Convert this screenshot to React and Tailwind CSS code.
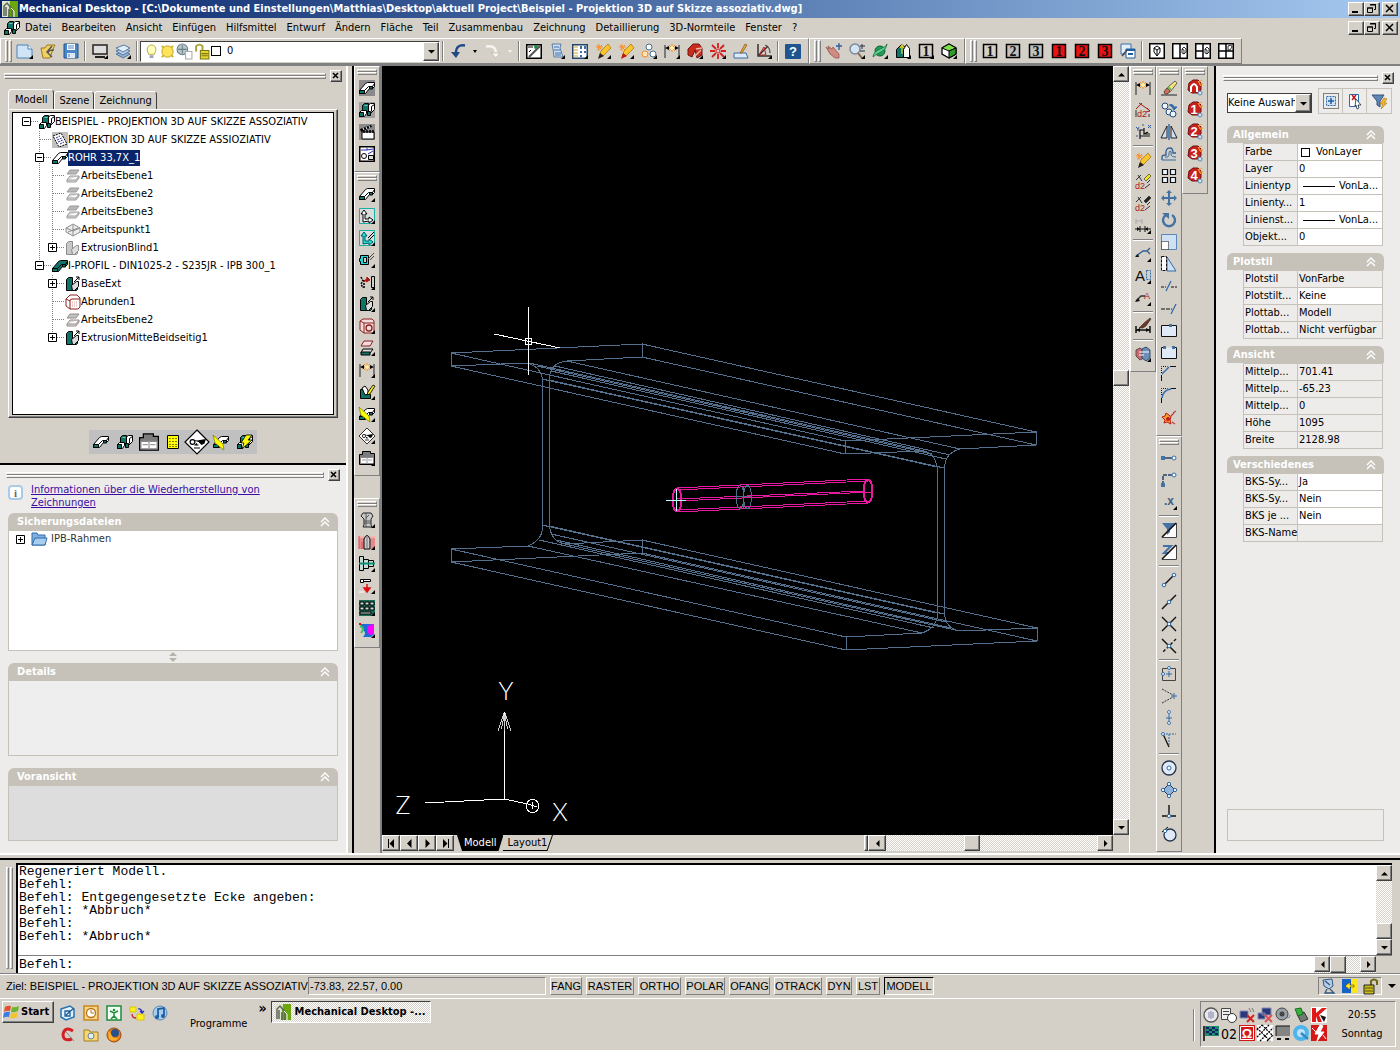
import React from "react";
import clsx from "clsx";

const raised =
  "border border-t-white border-l-white border-r-[#404040] border-b-[#404040] bg-[#d4d0c8] shadow-[inset_-1px_-1px_#808080]";
const track =
  "bg-[repeating-conic-gradient(#ffffff_0_25%,#d4d0c8_0_50%)] bg-[length:2px_2px]";

/* ---------- icons, all on a 16px grid ---------- */

const Svg = ({ children, className = "size-4" }) => (
  <svg viewBox="0 0 16 16" className={clsx("block shrink-0 overflow-visible", className)} fill="none" aria-hidden="true">
    {children}
  </svg>
);

const Beam = ({ top = "#fff", end = "#0e7468" }) => (
  <>
    <path d="M.5 10.500l6-7 2-1h7v4l-2 2h-3l-4 5h-6z" fill={top} stroke="#000" />
    <path d="M.5 10.500h5v3h-5zM10.500 6.500h3v2.500h-3z" fill={end} stroke="#000" />
    <path d="M5.500 10.500l4-4h4l2-3" stroke="#000" />
  </>
);

const Assembly = ({ bg }) => (
  <>
    {bg && <path d="M0 0h16v16H0z" fill={bg} />}
    <path d="M8.500 3.500l3-2h4v6l-4 4h-3z" fill="#fff" stroke="#000" />
    <path d="M12.500 4.500v5M12.500 4.500l3-2" stroke="#000" />
    <path d="M3.500 3.500l2-2h4v8h-6z" fill="#0e7468" stroke="#000" />
    <path d="M6 3h3l-1 1H5z" fill="#7fc4ba" />
    <path d="M.5 10.500l2-2h5v3l-2 3h-5z" fill="#fff" stroke="#000" />
    <path d="M.5 10.500h4v4h-4zM8.500 9.500h3v4h-3z" fill="#0e7468" stroke="#000" />
  </>
);

const Plane = ({ top = "#b8b8b8", side = "#9a9a9a" }) => (
  <>
    <path d="M5 2h9l-3 4H2z" fill={top} stroke={side} />
    <path d="M5 8h9l-3 4H2zM2 12v2h9l3-4V8" fill="#ddd" stroke={side} />
  </>
);

const Extrude = ({ fill = "#0e7468", line = "#000", arrow = true }) => (
  <>
    <path d="M1.500 3.500l2-2h4v7h5v5l-1 1h-10z" fill={fill} stroke={line} />
    <path d="M6.500 9.500l5-4h2v5l-4 4h-2z" fill="#ddd" stroke={line} />
    {arrow && <path d="M9 6l5-5M11 1h3v3" stroke={line} />}
  </>
);

const Dimension = () => (
  <>
    <path d="M1 2v13M15 2v13" stroke="#222" />
    <path d="M8 1v8M4 5h8M5 2l6 6M11 2l-6 6" stroke="#f28c28" />
    <circle cx="8" cy="5" r="2" fill="#fff1a8" />
    <path d="M1 5l4-2v4zM15 5l-4-2v4z" fill="#000" />
  </>
);

const Pencil = ({ tip = "#222" }) => (
  <>
    <path d="M1 4h7M4 1v7M2 2l5 5M7 2L2 7" stroke="#ff8a1c" />
    <path d="M4 14l2-6 7-7 3 4-8 8z" fill="#f9c52e" stroke="#a96b00" strokeWidth=".7" />
    <path d="M3 16l2-6 4 3z" fill={tip} />
  </>
);

const Face = () => (
  <>
    <path d="M8 0l8 8-8 8-8-8z" fill="#fff" stroke="#000" strokeWidth=".8" />
    <path d="M3 6l5 1 6-1-1 3-2 1-2-2" fill="#000" />
    <circle cx="5" cy="8" r="1.600" fill="#fff" stroke="#000" strokeWidth=".8" />
    <path d="M6 12h4M8 9l-1 1h2" stroke="#000" strokeWidth=".8" />
  </>
);

const Window = () => (
  <>
    <path d="M.5 4.500h3v-3h8v2h4v11H.5z" fill="#7c7c7c" stroke="#000" />
    <path d="M1.500 7.500h13v6h-13z" fill="#fff" stroke="#888" />
    <path d="M3 10h4M9 10h4M8 7v7" stroke="#999" />
  </>
);

const Bolt = () => (
  <>
    <Beam />
    <path d="M0 1l10 9 1 6L2 9z" fill="#ffff00" stroke="#777700" strokeWidth=".7" />
  </>
);

const Digit = ({ n, bg }) => (
  <>
    <path d="M1.500 1.500h13v13h-13z" fill={bg} stroke="#000" strokeWidth="1.500" />
    <text x="8" y="13" textAnchor="middle" fontSize="14" fontWeight="bold" fontFamily="Liberation Serif, serif" fill="#111">
      {n}
    </text>
  </>
);

const RedBall = ({ n }) => (
  <>
    <path d="M2 3l4-3h5l3 3v7l-3 3H5l-4-3z" fill="#c8201c" stroke="#6e1210" />
    <path d="M11 2l4-2M12 4h4M11 1l3 5" stroke="#ff9a2c" />
    <circle cx="13" cy="13" r="2" fill="#cfe3f5" stroke="#5b88b5" />
    {n ? (
      <text x="7" y="12" textAnchor="middle" fontSize="13" fontWeight="bold" fontFamily="Liberation Sans, sans-serif" fill="#fff">
        {n}
      </text>
    ) : (
      <path d="M4 12V7q3-6 6 0v5" stroke="#fff" strokeWidth="2" />
    )}
  </>
);

const Snap = ({ d, dots = [], dash }) => (
  <>
    <path d={d} stroke="#111" strokeWidth="1.400" strokeDasharray={dash} />
    {dots.map(([x, y]) => (
      <circle key={`${x}-${y}`} cx={x} cy={y} r="1.800" fill="#e6f2ff" stroke="#2e6ba8" />
    ))}
  </>
);

const Dim2 = ({ pen = "#222" }) => (
  <>
    <path d="M3 1l4 6M1 6l5-5M12 9l3-3" stroke="#333" />
    <path d="M9 5l5-5 2 2-5 5z" fill={pen} stroke="#222" strokeWidth=".6" />
    <text x="0" y="15" fontSize="9" fontFamily="Liberation Sans, sans-serif" fill="#b01818">d2</text>
    <path d="M10 14l5-4" stroke="#333" />
  </>
);

const ViewBox = ({ split }) => (
  <>
    <path d="M.750 .750h14.500v14.500H.750z" fill="#fff" stroke="#000" strokeWidth="1.500" />
    {split > 0 && <path d="M8 1v14" stroke="#000" strokeWidth="1.500" />}
    {split > 1 && <path d="M1 8h7" stroke="#000" strokeWidth="1.500" />}
    {split > 2 && <path d="M8 8h7" stroke="#000" strokeWidth="1.500" />}
    {split > 0 ? (
      <path d={split > 2 ? "M10 3l3-1 1 2-2 3h-2z" : "M10 6l2-2 2 2v3l-2 2-2-1zM10 6l2 1v4"} stroke="#000" strokeWidth=".8" />
    ) : (
      <path d="M5 5l3-2 3 2v4l-3 4-3-4zM5 5l3 2 3-2M8 7v5" stroke="#000" />
    )}
  </>
);

const ICONS = {
  app: (
    <>
      <path d="M0 0h16v16H0z" fill="#dfe6cf" />
      <path d="M8 0h8v16H6z" fill="#6aa60c" />
      <path d="M2 15V5l3-3 5 6v8M4 6v9M7 8v8" stroke="#5c665c" strokeWidth="1.500" />
      <path d="M9 7l3 3v6" stroke="#fff" />
    </>
  ),
  assembly: <Assembly />,
  assemblyGrey: <Assembly bg="#a0a0a0" />,
  newFile: (
    <>
      <path d="M0 2h11l4 4v9H0z" fill="#cfe5f7" stroke="#4b83b6" />
      <path d="M11 2v4h4" fill="#fff" stroke="#4b83b6" />
    </>
  ),
  open: (
    <>
      <path d="M1 5h4l2-3h8l-2 4-3 9H3z" fill="#f0d165" stroke="#9b7a1a" />
      <path d="M8 10q0-3 6-3M12 3l-5 6 5 5" stroke="#585858" strokeWidth="1.500" />
    </>
  ),
  save: (
    <>
      <path d="M1 1h14v14H1z" fill="#4b86c5" stroke="#23558c" />
      <path d="M4 1h8v6H4z" fill="#fff" />
      <path d="M4 10h8v5H4z" fill="#dce8f3" />
      <path d="M5 3h6M5 5h6M6 11v3" stroke="#4b86c5" />
    </>
  ),
  screen: (
    <>
      <path d="M1 2h14v9H1z" fill="#ddd" stroke="#222" strokeWidth="1.500" />
      <path d="M3 14h10" stroke="#222" strokeWidth="2" />
    </>
  ),
  layers: (
    <>
      <path d="M1 11l8-3 6 3-7 4z" fill="#8fb0d6" stroke="#56779c" />
      <path d="M1 8l8-3 6 3-7 4z" fill="#b9d1ea" stroke="#56779c" />
      <path d="M1 5l8-3 6 3-7 4z" fill="#e2eefa" stroke="#56779c" />
    </>
  ),
  bulb: (
    <>
      <path d="M5 11q-3-5-1-8 4-4 8 0 2 3-1 8z" fill="#ffffc0" stroke="#b7a93c" />
      <path d="M6 12h4v3H6z" fill="#9aa4b5" />
    </>
  ),
  sun: (
    <>
      <path d="M2 2l12 12M14 2L2 14" stroke="#c8b430" strokeWidth="2" />
      <circle cx="8" cy="8" r="6" fill="#ffe45a" stroke="#b9a01c" />
    </>
  ),
  freeze: (
    <>
      <circle cx="6" cy="6" r="5" fill="#b6c6c9" stroke="#6c8187" />
      <path d="M2 6h8M6 2v8" stroke="#6c8187" />
      <path d="M9 8h6v7H9z" fill="#fff" stroke="#aaa" />
    </>
  ),
  lock: (
    <>
      <path d="M2 8V3q3-3 6 0v4" stroke="#a8a030" strokeWidth="1.800" />
      <path d="M6 7h8v8H6z" fill="#e6d72e" stroke="#7d7510" />
      <path d="M7 10h6M7 12h6" stroke="#7d7510" />
    </>
  ),
  undo: (
    <>
      <path d="M15 2.500Q6 1 6 10" stroke="#234a86" strokeWidth="2.500" />
      <path d="M1 9h9l-4 6z" fill="#234a86" />
    </>
  ),
  redo: (
    <>
      <path d="M1 3.500q10-2 10 7" stroke="#f6f4f0" strokeWidth="2.500" />
      <path d="M6 10h9l-4 5z" fill="#f6f4f0" stroke="#b5b1a8" strokeWidth=".7" />
    </>
  ),
  sketch: (
    <>
      <path d="M.750 1.750h14.500v13.500H.750z" fill="#fff" stroke="#000" strokeWidth="1.500" />
      <path d="M3 14L14 3" stroke="#555" strokeWidth="2" />
      <path d="M2 4h5M3 9l2-2" stroke="#000" />
      <circle cx="10" cy="4" r="2" fill="#208a40" />
    </>
  ),
  list: (
    <>
      <path d="M3 1h9l-1 4 3 9H5L4 6z" fill="#cfe0f2" stroke="#5c7ca3" />
      <path d="M5 4h5M5 7h6M6 10h6M6 12h6" stroke="#3d6ea6" />
    </>
  ),
  grid: (
    <>
      <path d="M.750 1.750h14.500v13.500H.750z" fill="#fff" stroke="#24446c" strokeWidth="1.500" />
      <path d="M2 4h4M2 7h4M2 10h4M2 13h4" stroke="#d0a21c" />
      <path d="M8 3h2v3H8zM12 3h2v3h-2zM8 8h2v2H8zM12 8h2v2h-2zM8 12h2v2H8z" fill="#3a6ca8" />
    </>
  ),
  pencil: <Pencil />,
  pencil2: <Pencil tip="#c01818" />,
  gears: (
    <>
      <circle cx="8" cy="4" r="3" fill="#fff" stroke="#4a7097" />
      <circle cx="4" cy="11" r="3" fill="#ffe5b8" stroke="#f08c20" />
      <circle cx="12" cy="11" r="3" fill="#fff" stroke="#4a7097" />
    </>
  ),
  dimension: <Dimension />,
  magnet: (
    <>
      <path d="M1 6l5-5h6l3 4v7l-5 3-2-8-3 7-4-2z" fill="#cc2a1c" stroke="#701410" />
      <path d="M9 6l6-1M8 13l6-6" stroke="#e8b8a8" strokeWidth="1.500" />
    </>
  ),
  burst: (
    <>
      <path d="M8 0v5M8 11v5M0 8h5M11 8h5M2 2l4 4M10 10l4 4M14 2l-4 4M6 10l-4 4" stroke="#d42020" strokeWidth="1.800" />
      <circle cx="8" cy="8" r="2" stroke="#d42020" />
    </>
  ),
  draft: (
    <>
      <path d="M1 10h12l2 5H1z" fill="#dceaf8" stroke="#3b6ba2" />
      <path d="M7 10l5-9 2 1-5 8z" fill="#e9a23a" stroke="#845614" strokeWidth=".7" />
    </>
  ),
  angle: (
    <>
      <path d="M2 1v12h13M2 13L12 3" stroke="#333" strokeWidth="1.500" />
      <path d="M3 12l5-8 2 8z" stroke="#b02424" />
      <path d="M9 2q5 2 5 8" stroke="#333" />
    </>
  ),
  help: (
    <>
      <rect x="0" y="1" width="16" height="15" rx="1" fill="#1e5590" />
      <text x="8" y="13" textAnchor="middle" fontSize="13" fontWeight="bold" fontFamily="Liberation Sans, sans-serif" fill="#fff">?</text>
    </>
  ),
  pan: (
    <>
      <path d="M0 4l3 2-1-3 4 3 1-2 6 7v4l-4 0-5-4z" fill="#cf8a82" stroke="#8b4d49" strokeWidth=".7" />
      <path d="M13 0v7M10 3h6" stroke="#2d5da0" strokeWidth="1.300" />
    </>
  ),
  zoom: (
    <>
      <circle cx="6" cy="6" r="5" fill="#d3e4f3" stroke="#7b8a9a" strokeWidth="1.500" />
      <path d="M9 10l4 5" stroke="#8b6a4a" strokeWidth="2" />
      <path d="M13 1v5M11 3h5M11 8h5" stroke="#234" />
    </>
  ),
  orbit: (
    <>
      <circle cx="8" cy="8" r="5" fill="#21a05a" stroke="#0d5e31" />
      <path d="M1 14Q1 9 8 6t7-5q0 5-6 8t-8 5" fill="#5ad08c" stroke="#0d5e31" strokeWidth=".7" />
    </>
  ),
  home: (
    <>
      <path d="M1.500 6.500l5-5 4 3v10h-9z" fill="#0e7468" stroke="#000" />
      <path d="M8.500 6.500l3-5 3 4v9h-6z" fill="#fff" stroke="#000" />
      <path d="M7 11V3M5 5l2-3 2 3" stroke="#e0d020" strokeWidth="1.300" />
    </>
  ),
  cube: (
    <>
      <path d="M8 1l7 4v6l-7 4-7-4V5z" fill="#fff" stroke="#000" strokeWidth="1.300" />
      <path d="M8 1l7 4-7 3-7-3z" fill="#7ce04a" stroke="#000" />
      <path d="M15 5v6l-7 4V8z" fill="#2f9c28" stroke="#000" />
    </>
  ),
  one: <Digit n="1" bg="#d4d0c8" />,
  two: <Digit n="2" bg="#c0c0c0" />,
  three: <Digit n="3" bg="#c0c0c0" />,
  redOne: <Digit n="1" bg="#ee1111" />,
  redTwo: <Digit n="2" bg="#ee1111" />,
  redThree: <Digit n="3" bg="#ee1111" />,
  views: (
    <>
      <path d="M1 1h10v10H1z" fill="#e4eef8" stroke="#3d6ea6" />
      <path d="M6 6h9v9H6z" fill="#fff" stroke="#1f5fa0" />
      <path d="M6 7h9M8 11h5" stroke="#1f5fa0" strokeWidth="2" />
      <path d="M2 13l5-6" stroke="#445" strokeWidth="1.500" />
    </>
  ),
  view0: <ViewBox split={0} />,
  view1: <ViewBox split={1} />,
  view2: <ViewBox split={2} />,
  view3: <ViewBox split={3} />,
  part: <Beam />,
  partGrey: (
    <>
      <path d="M0 0h16v16H0z" fill="#8a8a8a" />
      <Beam />
    </>
  ),
  partGreen: <Beam top="#0e7468" />,
  clapper: (
    <>
      <path d="M0 0h16v16H0z" fill="#8a8a8a" />
      <path d="M1 5l11-4 1 2L2 8z" fill="#000" />
      <path d="M4 4l1 2M7 3l1 2M10 2l1 2" stroke="#fff" />
      <path d="M3 8h12v7H3z" fill="#fff" stroke="#000" />
      <path d="M5 6v3M8 6v3M11 6v3M14 6v3" stroke="#000" strokeWidth="1.500" />
    </>
  ),
  drawing: (
    <>
      <path d="M.750 .750h14.500v14.500H.750z" fill="#fff" stroke="#000" strokeWidth="1.500" />
      <path d="M2 4h6V2M8 4l6-1M9 8l5-3" stroke="#2a2ac0" />
      <circle cx="5" cy="10" r="2.500" stroke="#000" />
      <path d="M9.500 9.500h5v4h-5z" fill="#ddd" stroke="#000" />
    </>
  ),
  axes: (
    <>
      <path d="M.500 .500h15v15H.500z" stroke="#1bb0a4" fill="#dcdcdc" />
      <path d="M4 14V6H2l3-4 3 4H6v5h4V9l4 3-4 3v-2z" fill="#fff" stroke="#000" />
    </>
  ),
  axesCyan: (
    <>
      <path d="M.500 .500h15v15H.500z" stroke="#1bb0a4" fill="#dcdcdc" />
      <path d="M4 14V6H2l3-4 3 4H6v5h4V9l4 3-4 3v-2z" fill="#20e0e0" stroke="#005a5a" />
      <path d="M9 8l6-6M11 9l4-4" stroke="#000" />
    </>
  ),
  profile: (
    <>
      <path d="M1.500 3.500h8v9h-8v-3h-1v-3h1z" fill="#20d8d8" stroke="#000" />
      <path d="M4.500 5.500h3v5h-3z" fill="#d4d0c8" stroke="#000" />
      <path d="M9 7l6-6M11 8l4-4" stroke="#444" />
    </>
  ),
  mirrorPart: (
    <>
      <path d="M2 3l2 4-2 3 2 4M5 6v8" stroke="#000" strokeDasharray="2 1" strokeWidth="1.500" />
      <path d="M4 8q3-4 6-2M8 3l3 3-4 2z" stroke="#b01818" fill="#b01818" />
      <path d="M12.500 2.500h3v11h-3z" stroke="#000" />
    </>
  ),
  extrude: <Extrude />,
  extrudeGrey: <Extrude fill="#c8c8c8" line="#8c8c8c" arrow={false} />,
  hole: (
    <>
      <path d="M1 3l3-2h9l2 2v12H5l-4-3z" fill="#f3dcdc" stroke="#8c2020" />
      <path d="M5 5h10M5 5v10M1 3l4 2" stroke="#8c2020" />
      <circle cx="10" cy="10" r="3" stroke="#8c2020" strokeWidth="1.300" />
    </>
  ),
  round: (
    <>
      <path d="M1 5l4-4h7l3 3v9l-2 2H5l-4-3z" fill="#fff" stroke="#8c2020" />
      <path d="M5 15V7q0-2 2-2h8M1 5l4 2" stroke="#8c2020" />
      <path d="M7 8h6M7 10h6M7 12h6" stroke="#d8a0a0" strokeDasharray="1 1" />
    </>
  ),
  plane: <Plane />,
  planeRed: (
    <>
      <path d="M5 1h9l-3 5H2z" fill="#f3dcdc" stroke="#8c2020" />
      <path d="M4 9h10l-3 4H2z" fill="#ddd" stroke="#000" />
      <path d="M2 12h9v3H2z" fill="#0e7468" stroke="#000" />
    </>
  ),
  planeTwo: <Plane top="#b9c6c2" side="#9a8a8a" />,
  point: (
    <>
      <path d="M8 2l7 4v4l-7 4-7-4V6z" fill="#eee" stroke="#8c8c8c" />
      <path d="M1 6l7 3 7-3M8 3v11M3 10l10-4" stroke="#8c8c8c" />
    </>
  ),
  sheet: (
    <>
      <path d="M0 0h16v16H0z" fill="#c0c0c0" />
      <path d="M1 4l8-3 6 11-8 3z" fill="#fff" stroke="#000" strokeDasharray="2 1" />
      <path d="M4 6l4-2M5 8l5-2M6 10l5-2M8 12l4-2" stroke="#22228c" strokeDasharray="2 1" />
    </>
  ),
  editPart: (
    <>
      <path d="M1.500 5.500v9h10v-4h-5v-5z" fill="#0e7468" stroke="#000" />
      <path d="M3 4l3-2 3 4v4l-3 1z" fill="#fff" stroke="#000" />
      <path d="M8 11l1-3 5-7 2 1-5 8z" fill="#f2e61c" stroke="#000" strokeWidth=".8" />
    </>
  ),
  bolt: <Bolt />,
  face: <Face />,
  window: <Window />,
  page: (
    <>
      <path d="M2.500 1.500h11v13h-11z" fill="#ffff00" stroke="#000" />
      <path d="M4 4.500h8M4 7.500h8M4 10.500h8M4 12.500h8" stroke="#8a7a00" strokeDasharray="2 1" />
    </>
  ),
  flash: (
    <>
      <Assembly />
      <path d="M9 1h6l-4 5h4L5 15l2-6H4z" fill="#ffff00" stroke="#000" strokeWidth=".8" />
    </>
  ),
  screw: (
    <>
      <path d="M4 1h8l2 3-2 3v6l1 2H4l1-2V7L2 4z" fill="#c9c9c9" stroke="#222" />
      <path d="M7 1v14M10 3l-3 3M5 9h7M5 11h7" stroke="#555" />
    </>
  ),
  holeRed: (
    <>
      <path d="M0 2h16v13H0z" fill="#f0b4b4" />
      <path d="M0 4h5v11H0zM12 4h4v11h-4z" fill="#e88a8a" />
      <path d="M0 15V2M3 15V8" stroke="#d84a4a" />
      <path d="M5 15V5q3-7 6 0v10z" fill="#ccc" stroke="#000" />
      <path d="M8 3v12" stroke="#777" />
    </>
  ),
  shaft: (
    <>
      <path d="M.5 .5h4v14h-4zM4.500 3.500h5v9h-5zM9.500 4.500h5v6h-5z" fill="#c8dcd4" stroke="#000" />
      <path d="M0 7.500h16" stroke="#0e9078" strokeWidth="2" />
    </>
  ),
  insert: (
    <>
      <path d="M1.500 1.500h3v3h-3zM4.500 1.500h7v2h-7z" fill="#fff" stroke="#000" />
      <path d="M8 6v4H5l3 4 3-4H8" fill="#e01010" stroke="#e01010" strokeWidth="1.500" />
      <path d="M0 14h5" stroke="#fff" />
    </>
  ),
  calc: (
    <>
      <path d="M0 0h16v16H0z" fill="#1d6a58" />
      <path d="M1 2h4v3H1zM6 2h4v3H6zM11 2h4v3h-4zM1 7h4v3H1zM6 7h4v3H6zM11 7h4v3h-4zM1 12h11v2H1z" fill="#c8dcd4" stroke="#000" />
    </>
  ),
  fem: (
    <>
      <path d="M1 2h14v10l-3 3H4q4-4 0-7z" fill="#1c6cd8" />
      <path d="M10 3q-4 6 1 10l4-1V2z" fill="#ff00ff" />
      <path d="M1 4q3 1 3 4l-2 3" stroke="#40c060" strokeWidth="2" />
      <path d="M0 1h2v2H0z" fill="#f00" />
    </>
  ),
  paramDim: (
    <>
      <path d="M1 7l6-6M4 1l10 7M12 6l3 3-4 1" stroke="#a01818" />
      <text x="2" y="15" fontSize="9" fontFamily="Liberation Sans, sans-serif" fill="#a01818">d2</text>
      <path d="M1 8v7M14 12v3" stroke="#333" />
    </>
  ),
  ordinate: (
    <>
      <path d="M5 15V6h4v4h6M5 12h10M9 4v6l4-2" stroke="#111" strokeWidth="1.200" />
      <path d="M1 3l2 2 1-2M3 5v2M7 1h2M13 1l3 3M16 1l-3 3M1 12h2" stroke="#2d5da0" />
    </>
  ),
  editDim: <Dim2 pen="#f2e61c" />,
  moveDim: <Dim2 />,
  alignDim: (
    <>
      <path d="M1 1v5M7 1v5M1 3h6" stroke="#aaa" />
      <path d="M0 11h16M5 8v6M10 8v6" stroke="#111" />
      <path d="M5 11l-3-2v4zM10 11l3-2v4z" fill="#111" />
    </>
  ),
  leader: (
    <>
      <path d="M1 10l7-5h4l3-3M12 5l3 3" stroke="#2e5f96" strokeWidth="1.300" />
      <path d="M0 11l3-3 1 3z" fill="#111" />
    </>
  ),
  textA: (
    <>
      <text x="0" y="13" fontSize="15" fontFamily="Liberation Sans, sans-serif" fill="#111">A</text>
      <path d="M11.500 2.500h4v9h-4z" stroke="#2e6ba8" strokeDasharray="2 1" />
    </>
  ),
  leaderA: (
    <>
      <path d="M1 11l5-5h4" stroke="#333" strokeWidth="1.300" />
      <path d="M0 12l3-4 2 3z" fill="#111" />
      <text x="9" y="9" fontSize="9" fontFamily="Liberation Sans, sans-serif" fill="#b01818">A</text>
    </>
  ),
  brushDim: (
    <>
      <path d="M1 8v7M15 8v7M1 12h14" stroke="#111" strokeWidth="1.500" />
      <path d="M1 12l4-2v4zM15 12l-4-2v4z" fill="#111" />
      <path d="M4 10l5-5 6-5 1 1-5 7-3 2z" fill="#6b3a24" stroke="#222" strokeWidth=".5" />
    </>
  ),
  books: (
    <>
      <path d="M1 4l4-2 4 3v7l-4 2-4-4z" fill="#c8686a" stroke="#5f4a55" />
      <path d="M7 3l4-2 4 3v8l-4 3-4-3z" fill="#6c8fba" stroke="#34496b" />
      <path d="M4 6h5M9 6h5M4 9h5" stroke="#fff" />
    </>
  ),
  erase: (
    <>
      <path d="M0 15h16" stroke="#222" />
      <path d="M3 12l4-5 7-6 2 2-6 8-4 3z" fill="#f3e47a" stroke="#444" strokeWidth=".8" />
      <path d="M3 12l3-4 3 3-3 3H4z" fill="#e06a5a" stroke="#444" strokeWidth=".8" />
      <path d="M7 7l3 3" stroke="#6fae5c" strokeWidth="2" />
    </>
  ),
  copy: (
    <>
      <circle cx="4" cy="4" r="3" fill="#eef4fb" stroke="#234a7a" />
      <circle cx="8" cy="10" r="3" fill="#eef4fb" stroke="#234a7a" />
      <circle cx="12" cy="12" r="3" fill="#eef4fb" stroke="#234a7a" />
      <path d="M8 3q5-2 5 4M11 5l2 3 3-3z" stroke="#2e6ba8" fill="#2e6ba8" />
    </>
  ),
  mirror: (
    <>
      <path d="M6 2v12H0zM10 2v12h6z" fill="#cfe2f5" stroke="#222" />
      <path d="M8 0v16" stroke="#2e6ba8" strokeWidth="1.500" />
    </>
  ),
  offset: (
    <>
      <path d="M1 14v-3q0-2 4-2-1-7 4-7 3 0 3 5h3" stroke="#2e5f96" strokeWidth="1.300" />
      <path d="M4 11q4 1 4-3 0-3 1-3 2 0 1 3 0 3 5 3M1 14h14" stroke="#2e6ba8" />
    </>
  ),
  array: <path d="M1.500 1.500h5v5h-5zM9.500 1.500h5v5h-5zM1.500 9.500h5v5h-5zM9.500 9.500h5v5h-5z" fill="#eef4fb" stroke="#111" strokeWidth="1.200" />,
  move: <path d="M8 0l3 3H9v4h4V5l3 3-3 3V9H9v4h2l-3 3-3-3h2V9H3v2L0 8l3-3v2h4V3H5z" fill="#4472a4" />,
  rotate: (
    <>
      <path d="M5 3a6 6 0 1 0 6 0" stroke="#4472a4" strokeWidth="2.400" />
      <path d="M1 1h7v6z" fill="#4472a4" />
    </>
  ),
  scale: (
    <>
      <path d="M.500 .500h15v15H.500z" fill="#cfe2f5" stroke="#5b88b5" />
      <path d="M.5 7.500h7v8h-7z" fill="#fff" stroke="#111" strokeDasharray="1 1" />
    </>
  ),
  stretch: (
    <>
      <path d="M6 1v14h9z" fill="#cfe2f5" stroke="#2e6ba8" />
      <path d="M.5 .5h5v14h-5z" fill="#fff" stroke="#111" strokeDasharray="3 1" />
    </>
  ),
  trim: (
    <>
      <path d="M0 9h5M10 9h6" stroke="#111" strokeDasharray="3 1" />
      <path d="M5 13l5-10" stroke="#2e6ba8" strokeWidth="1.300" />
    </>
  ),
  extend: (
    <>
      <path d="M0 9h11" stroke="#111" strokeDasharray="4 1" />
      <path d="M10 14l5-10" stroke="#2e6ba8" strokeWidth="1.300" />
    </>
  ),
  breakPt: (
    <>
      <path d="M.500 3.500h15v11H.500z" fill="#dfeaf6" stroke="#111" />
      <path d="M8 2h3v3H8z" fill="#4472a4" />
    </>
  ),
  breakGap: (
    <>
      <path d="M3 3.500H.500v11h15v-11H13" fill="#dfeaf6" stroke="#111" />
      <path d="M2 2h3v3H2zM11 2h3v3h-3z" fill="#4472a4" />
    </>
  ),
  chamfer: (
    <>
      <path d="M.5 15V9M9 .5h6" stroke="#111" />
      <path d="M1 8l7-7" stroke="#2e6ba8" strokeWidth="1.500" />
      <path d="M.5 7V.5h6" stroke="#111" strokeDasharray="1 1" />
    </>
  ),
  fillet: (
    <>
      <path d="M.5 15v-5M10 .5h5" stroke="#111" />
      <path d="M1 10q1-8 9-9" stroke="#2e6ba8" strokeWidth="1.600" />
      <path d="M.5 7V.5h6" stroke="#111" strokeDasharray="1 1" />
    </>
  ),
  explode: (
    <>
      <path d="M1 7l3-1 1-3 3 2 2 2-1 3 1 4-4-2-3 1 1-3z" fill="#f0a028" stroke="#c01818" />
      <circle cx="7" cy="9" r="2" fill="#c01818" />
      <path d="M9 7l4-4M12 3l3-2M11 12l3 2" stroke="#c04040" strokeWidth="1.300" />
    </>
  ),
  red0: <RedBall />,
  red1: <RedBall n="1" />,
  red2: <RedBall n="2" />,
  red3: <RedBall n="3" />,
  red4: <RedBall n="4" />,
  track: (
    <>
      <path d="M2 8h11" stroke="#24446c" strokeWidth="1.500" />
      <path d="M0 6h4v4H0z" fill="#4472a4" />
      <circle cx="13" cy="8" r="2" fill="#fff" stroke="#2e6ba8" />
    </>
  ),
  from: (
    <>
      <path d="M2 13V3h10" stroke="#24446c" strokeWidth="1.500" strokeDasharray="4 1" />
      <path d="M0 11h4v4H0z" fill="#4472a4" />
      <circle cx="13" cy="3" r="2" fill="#fff" stroke="#2e6ba8" />
    </>
  ),
  dotX: <text x="3" y="11" fontSize="12" fontWeight="bold" fontFamily="Liberation Sans, sans-serif" fill="#3d5f86">.x</text>,
  filter: (
    <>
      <path d="M15.500 1v14.500H1z" fill="#fff" stroke="#444" />
      <path d="M1 1h13l-5 6v3l-3 3V7z" fill="#4472a4" />
      <path d="M1 15L15 1" stroke="#111" strokeWidth="1.500" />
    </>
  ),
  zFilter: (
    <>
      <path d="M15.500 1v14.500H1z" fill="#fff" stroke="#444" />
      <path d="M2 2h8L3 9h5" stroke="#4472a4" strokeWidth="2" />
      <path d="M1 15L15 1" stroke="#111" strokeWidth="1.200" />
    </>
  ),
  endpoint: <Snap d="M3 13L13 3" dots={[[3, 13], [13, 3]]} />,
  midpoint: <Snap d="M1 15L15 1" dots={[[8, 8]]} />,
  intersect: <Snap d="M1 1l14 14M15 1L1 15" dots={[[8, 8]]} />,
  apparent: (
    <>
      <Snap d="M15 1L1 15" dash="3 2" />
      <Snap d="M1 1l14 14" dots={[[8, 8]]} />
    </>
  ),
  insertion: (
    <>
      <path d="M1.500 2.500h13v12h-13z" stroke="#444" />
      <path d="M8 5v6M5 8h6" stroke="#2e6ba8" />
      <circle cx="8" cy="2" r="1.500" fill="#fff" stroke="#2e6ba8" />
      <circle cx="2" cy="8" r="1.500" fill="#fff" stroke="#2e6ba8" />
    </>
  ),
  apex: (
    <>
      <path d="M1 1l11 6M1 15l11-6" stroke="#333" strokeDasharray="2 1" />
      <path d="M10 8h6M13 5v6" stroke="#2e6ba8" />
    </>
  ),
  between: (
    <>
      <path d="M8 4v8M5 8h6" stroke="#2e6ba8" />
      <circle cx="8" cy="2" r="1.500" fill="#fff" stroke="#4472a4" />
      <circle cx="8" cy="13" r="1.500" fill="#fff" stroke="#4472a4" />
    </>
  ),
  corner: (
    <>
      <path d="M2 2h13M8 2v12" stroke="#2e6ba8" strokeDasharray="2 1" />
      <path d="M2 2l6 13" stroke="#111" strokeWidth="1.300" />
      <circle cx="2" cy="2" r="1.500" fill="#fff" stroke="#2e6ba8" />
    </>
  ),
  center: (
    <>
      <circle cx="8" cy="8" r="7" fill="#dfeaf6" stroke="#24344c" strokeWidth="1.300" />
      <circle cx="8" cy="8" r="2" fill="#fff" stroke="#2e6ba8" />
    </>
  ),
  quadrant: (
    <>
      <path d="M8 2l6 6-6 6-6-6z" fill="#8fb4dc" stroke="#24344c" />
      {[[8, 2], [14, 8], [8, 14], [2, 8]].map(([x, y]) => (
        <circle key={`${x}-${y}`} cx={x} cy={y} r="1.700" fill="#e6f2ff" stroke="#2e6ba8" />
      ))}
    </>
  ),
  perpendicular: <Snap d="M1 12h14M8 1v11" dots={[[8, 12]]} />,
  tangent: (
    <>
      <circle cx="9" cy="9" r="6" fill="#dfeaf6" stroke="#24344c" strokeWidth="1.300" />
      <path d="M1 6l6-5" stroke="#111" />
      <circle cx="4" cy="5" r="1.700" fill="#fff" stroke="#2e6ba8" />
    </>
  ),
  quickSelect: (
    <>
      <path d="M.5 .5h15v15H.5z" stroke="#111" strokeDasharray="1 1" />
      <path d="M3.500 3.500h9v9h-9z" fill="#cfe2f5" stroke="#2e6ba8" strokeDasharray="2 1" />
      <path d="M8 5v6M5 8h6" stroke="#1f5fa0" strokeWidth="1.500" />
    </>
  ),
  pick: (
    <>
      <path d="M2.500 1.500h9v12h-9z" fill="#fff" stroke="#2e6ba8" />
      <path d="M5 2l4 5M9 2L5 7" stroke="#c01818" strokeWidth="1.500" />
      <path d="M9 6l5 6h-3l1 3-2 1-1-4-1 1z" fill="#fff" stroke="#234" strokeWidth=".8" />
    </>
  ),
  funnel: (
    <>
      <path d="M1 2h12L9 8v6l-3-2V8z" fill="#5f86b4" stroke="#34557c" />
      <path d="M13 5l3 1-3 4h3l-6 6 2-5H9z" fill="#f5b92c" stroke="#a86f10" strokeWidth=".6" />
    </>
  ),
  folder: (
    <>
      <path d="M1 2h5l1 2h7v10H1z" fill="#7fb0e0" stroke="#2e6ba8" />
      <path d="M4 7h12l-2 7H1z" fill="#a9cdf0" stroke="#2e6ba8" />
    </>
  ),
  flag: (
    <>
      <path d="M1 3q3-2 6-1L6 7q-3-1-6 1z" fill="#e5502c" />
      <path d="M8 3q3 1 7-1l-1 5q-4 2-7 1z" fill="#6cb42c" />
      <path d="M0 9q3-2 6-1l-1 5q-3-1-6 1z" fill="#3c7ce0" />
      <path d="M7 9q3 1 7-1l-1 5q-4 2-7 1z" fill="#f4c22c" />
    </>
  ),
  mail: (
    <>
      <path d="M1 4l9-3 4 3v8l-8 3-5-3z" fill="#e6f1fb" stroke="#2473b4" strokeWidth="1.500" />
      <path d="M5 6h5v5H5zM6 10l8-7" stroke="#1c5f9c" strokeWidth="1.300" />
    </>
  ),
  clock: (
    <>
      <path d="M1 1h14v14H1z" fill="#f7d488" stroke="#c8861c" strokeWidth="1.500" />
      <circle cx="8" cy="8" r="4.500" fill="#fff" stroke="#b87414" strokeWidth="1.300" />
      <path d="M8 5v3h3" stroke="#b87414" />
    </>
  ),
  green: (
    <>
      <path d="M1 1h14v14H1z" fill="#f4fff4" stroke="#1e8a3c" strokeWidth="1.500" />
      <path d="M4 6l4 2 4-2M8 8v3l-3 3M8 11l3 3" stroke="#1e8a3c" strokeWidth="1.500" />
      <circle cx="8" cy="5" r="1.300" fill="#1e8a3c" />
    </>
  ),
  transfer: (
    <>
      <path d="M1 2h6v5H1zM8 9h7v6H8z" fill="#ffee22" stroke="#d8c400" />
      <path d="M9 4q3-1 4 3M11 6l2 2 2-2" stroke="#2a2ac0" strokeWidth="1.300" />
      <path d="M3 9q0 4 4 4" stroke="#d42020" strokeWidth="1.300" />
    </>
  ),
  music: (
    <>
      <circle cx="8" cy="8" r="7" fill="#a9cdf0" stroke="#5b88b5" />
      <path d="M6 12V4l6-1v7" stroke="#1f5fa0" strokeWidth="1.800" />
      <circle cx="5" cy="12" r="2" fill="#1f5fa0" />
      <circle cx="11" cy="11" r="2" fill="#1f5fa0" />
    </>
  ),
  redC: (
    <>
      <path d="M13 4Q5-1 3 7q0 8 9 5" stroke="#d42020" strokeWidth="3" />
      <path d="M6 5l8 9" stroke="#777" strokeWidth=".8" />
    </>
  ),
  search: (
    <>
      <path d="M1 3h5l1 2h8v9H1z" fill="#f6d873" stroke="#a67c1a" />
      <circle cx="8" cy="9" r="3" fill="#dfeefa" stroke="#6c7f96" />
    </>
  ),
  fox: (
    <>
      <circle cx="8" cy="8" r="7" fill="#e8801c" stroke="#9c4a0c" />
      <circle cx="9" cy="6" r="4" fill="#28508c" />
      <path d="M2 4q3 2 4 5t7 2q-5 5-10 1z" fill="#f6b02c" />
    </>
  ),
  dish: (
    <>
      <path d="M2 2l9-1 1 7-4 3-5-3z" fill="#b5cdea" stroke="#34557c" />
      <path d="M4 3l5 4M6 11l-2 4h9l-4-4" stroke="#34557c" strokeWidth="1.300" />
    </>
  ),
  plug: (
    <>
      <path d="M0 1h9v14H0z" fill="#1463c8" />
      <path d="M9 1h7v14H9z" fill="#ffe61c" />
      <path d="M3 8l5-4v3h4v2H8v3z" fill="#ffe61c" stroke="#222" strokeWidth=".5" />
    </>
  ),
  padlock: (
    <>
      <path d="M8 7V3q3-3 6 0v4" stroke="#6d6510" strokeWidth="2" />
      <path d="M1 7h10v9H1z" fill="#c9b91c" stroke="#222" />
      <path d="M2 10h8M2 13h8" stroke="#5f5708" />
    </>
  ),
  pause: (
    <>
      <circle cx="8" cy="8" r="7" fill="#e8e8f0" stroke="#555" strokeWidth="1.300" />
      <path d="M6 5v6M8 4v8M10 5v6" stroke="#8080a0" />
    </>
  ),
  server: (
    <>
      <path d="M.5 1.500h9v11h-9z" fill="#eee" stroke="#444" />
      <path d="M2 4.500h6M2 7.500h6" stroke="#444" />
      <circle cx="11" cy="11" r="4.500" fill="#fff" stroke="#333" />
    </>
  ),
  netOff: (
    <>
      <path d="M1 4h8v7H1z" fill="#28387c" stroke="#8a8ab0" />
      <path d="M10 1l2 4M13 1l2 4" stroke="#777" />
      <path d="M8 8l7 7M15 8l-7 7" stroke="#d42020" strokeWidth="2" />
    </>
  ),
  netOff2: (
    <>
      <path d="M5 1h9v7H5zM1 6h7v6H1z" fill="#28387c" stroke="#8a8ab0" />
      <path d="M8 8l7 7M15 8l-7 7" stroke="#e05050" strokeWidth="2" />
    </>
  ),
  speaker: (
    <>
      <circle cx="7" cy="7" r="6" fill="#9aa0a8" stroke="#444" />
      <circle cx="7" cy="7" r="2.500" fill="#444" />
      <path d="M12 11q3 0 3-3" stroke="#7088c0" />
    </>
  ),
  usb: (
    <>
      <path d="M4 7l7-2 4 7-7 3z" fill="#6f7a70" stroke="#333" />
      <path d="M2 2l6-1 2 6-5 2z" fill="#36b03c" stroke="#1b6c20" />
    </>
  ),
  kasper: (
    <>
      <path d="M0 0h16v16H0z" fill="#fff" />
      <path d="M1 1h4v5l6-5h5L8 8l3 7H7L5 9v6H1z" fill="#e01818" />
      <path d="M9 8l6 2-2 5z" fill="#111" />
    </>
  ),
  checker: (
    <>
      <path d="M2 1h14v10H2z" fill="#1c8c6c" />
      <path d="M3 2h3v2H3zM9 2h3v2H9zM6 4h3v2H6zM12 4h3v2h-3zM3 6h3v2H3zM9 6h3v2H9zM6 8h3v2H6zM12 8h3v2h-3z" fill="#10206c" />
      <path d="M1 1v15" stroke="#000" strokeWidth="1.500" />
    </>
  ),
  zeroTwo: <text x="0" y="14" fontSize="14" fontFamily="DejaVu Sans Condensed, sans-serif" fill="#000">02</text>,
  omega: (
    <>
      <path d="M0 0h16v16H0z" fill="#d41818" />
      <path d="M1.500 1.500h13v13h-13z" stroke="#fff" />
      <text x="8" y="13" textAnchor="middle" fontSize="13" fontWeight="bold" fontFamily="Liberation Sans, sans-serif" fill="#fff">Ω</text>
    </>
  ),
  crossPattern: (
    <>
      <path d="M0 0h16v16H0z" fill="#fff" />
      <path d="M0 5l5-5M0 12L12 0M3 16L16 3M10 16l6-6M0 3l13 13M5 0l11 11" stroke="#000" strokeDasharray="2 1" strokeWidth="1.300" />
    </>
  ),
  greyScreen: (
    <>
      <path d="M1 1h14v10H1z" fill="#848484" />
      <path d="M1 11V1h14" stroke="#111" />
      <path d="M2 14h4M10 14h4" stroke="#111" strokeWidth="2" />
    </>
  ),
  quick: (
    <>
      <circle cx="8" cy="8" r="6" stroke="#4db4ec" strokeWidth="4" fill="#bfe2f8" />
      <path d="M8 8l7 6" stroke="#2d8cc8" strokeWidth="2.500" />
    </>
  ),
  redFlash: (
    <>
      <path d="M0 0h16v16H0z" fill="#d41818" />
      <path d="M9 0L4 9h4l-2 7 7-9H9l3-6zM1 3l4 4M12 10l3 4" fill="#fff" stroke="#fff" />
    </>
  ),
};

const Icon = ({ name, className }) => <Svg className={className}>{ICONS[name]}</Svg>;

/* ---------- small controls ---------- */

const ToolButton = ({ name, fly, className = "h-[22px] w-[23px]" }) => (
  <button type="button" aria-label={name} className={clsx("flex shrink-0 items-center justify-center", className)}>
    <Svg>
      {ICONS[name]}
      {fly && <path d="M16 12v4h-4z" fill="#000" />}
    </Svg>
  </button>
);

const ARROWS = {
  up: "M4 9.500h7L7.500 6z",
  down: "M4 6h7L7.500 9.500z",
  left: "M9.500 4v7L6 7.500z",
  right: "M6 4v7l3.500-3.500z",
  first: "M10 3v9L5.500 7.500zM4 3h1v9H4z",
  last: "M5 3v9l4.500-4.500zM10 3h1v9h-1z",
  prev: "M9.500 3v9L5 7.500z",
  next: "M5.500 3v9L10 7.500z",
};

const ArrowButton = ({ dir, className = "size-4" }) => (
  <button type="button" aria-label={dir} className={clsx("flex shrink-0 items-center justify-center", raised, className)}>
    <svg viewBox="0 0 15 15" className="size-[15px] shrink-0" aria-hidden="true">
      <path d={ARROWS[dir]} />
    </svg>
  </button>
);

const Caption = ({ kind }) => (
  <button type="button" aria-label={kind} className={clsx("flex h-3.5 w-4 items-center justify-center", raised)}>
    <svg viewBox="0 0 12 10" className="h-2.5 w-3" fill="none" stroke="#000" aria-hidden="true">
      {kind === "minimize" && <path d="M2 8h6" strokeWidth="2" />}
      {kind === "restore" && <path d="M4.500 1v-.500h5v5H8M4 1h6M1.500 4h5v4.500h-5zM1 4h6" />}
      {kind === "close" && <path d="M2 1l7 7M9 1L2 8" strokeWidth="1.500" />}
    </svg>
  </button>
);

const CaptionSet = () => (
  <div className="ml-auto flex pr-0.5">
    <Caption kind="minimize" />
    <Caption kind="restore" />
    <span className="w-0.5" />
    <Caption kind="close" />
  </div>
);

const Ridge = () => <span className="block h-[3px] border border-t-white border-l-white border-r-[#808080] border-b-[#808080]" />;

const PanelGrip = ({ className }) => (
  <div className={clsx("flex items-center", className)}>
    <div className="grow">
      <Ridge />
      <Ridge />
    </div>
    <button type="button" aria-label="Schließen" className={clsx("flex size-3 items-center justify-center", raised)}>
      <svg viewBox="0 0 8 8" className="size-2" stroke="#000" strokeWidth="1.500" aria-hidden="true">
        <path d="M1 1l5 5M6 1L1 6" />
      </svg>
    </button>
  </div>
);

const Chevrons = () => (
  <svg viewBox="0 0 10 10" className="size-2.5" fill="none" stroke="#fff" strokeWidth="1.300" aria-hidden="true">
    <path d="M1 5l4-4 4 4M1 9l4-4 4 4" />
  </svg>
);

const SectionHeader = ({ children, className }) => (
  <button
    type="button"
    className={clsx("flex w-full items-center justify-between rounded-t-md bg-[#c6c2ba] pr-2 text-left font-bold text-white", className)}
  >
    {children}
    <Chevrons />
  </button>
);

/* ---------- top bars ---------- */

const MENU = [
  "Datei", "Bearbeiten", "Ansicht", "Einfügen", "Hilfsmittel", "Entwurf", "Ändern", "Fläche", "Teil",
  "Zusammenbau", "Zeichnung", "Detaillierung", "3D-Normteile", "Fenster", "?",
];

const HGroup = ({ children }) => (
  <div className="flex items-center border border-t-white border-l-white border-r-[#808080] border-b-[#808080] pr-1">
    <div className="flex h-[22px] w-3 shrink-0 gap-px pl-1">
      <span className="w-[3px] border border-t-white border-l-white border-r-[#808080] border-b-[#808080]" />
      <span className="w-[3px] border border-t-white border-l-white border-r-[#808080] border-b-[#808080]" />
    </div>
    {children}
  </div>
);

const HSep = () => <span className="mx-0.5 h-5 w-0.5 shrink-0 border-l border-l-[#808080] bg-white" />;

const DropMark = ({ muted }) => (
  <span className={clsx("mx-1 border-x-2 border-t-[3px] border-x-transparent", muted ? "border-t-[#f4f2ee]" : "border-t-black")} />
);

const Toolbars = () => (
  <div className="flex h-[28px] border-b-2 border-[#808080]">
    <HGroup>
      <ToolButton name="newFile" fly />
      <ToolButton name="open" />
      <ToolButton name="save" />
      <HSep />
      <ToolButton name="screen" fly />
      <ToolButton name="layers" fly />
      <HSep />
      <div className="flex h-[21px] w-[300px] items-center border border-t-[#404040] border-l-[#404040] border-r-white border-b-white bg-white pl-[3px]">
        <Icon name="bulb" className="mr-px size-[15px]" />
        <Icon name="sun" className="mr-px size-[15px]" />
        <Icon name="freeze" className="mr-px size-[17px]" />
        <Icon name="lock" className="size-[17px]" />
        <span className="size-2.5 shrink-0 border border-black bg-white" />
        <select aria-label="Layer" className="h-full min-w-0 grow appearance-none bg-white pl-1.5 outline-none">
          <option>0</option>
        </select>
        <ArrowButton dir="down" className="h-[19px] w-4" />
      </div>
      <HSep />
      <ToolButton name="undo" />
      <DropMark />
      <ToolButton name="redo" />
      <DropMark muted />
      <HSep />
      <ToolButton name="sketch" />
      {["list", "grid", "pencil", "pencil2", "gears", "dimension", "magnet", "burst"].map((n) => (
        <ToolButton key={n} name={n} fly />
      ))}
      <ToolButton name="draft" />
      <ToolButton name="angle" fly />
      <HSep />
      <ToolButton name="help" />
    </HGroup>
    <HGroup>
      <ToolButton name="pan" />
      <ToolButton name="zoom" fly />
      <ToolButton name="orbit" fly />
      <ToolButton name="home" fly />
      <ToolButton name="one" fly />
      <ToolButton name="cube" fly />
    </HGroup>
    <HGroup>
      {["one", "two", "three", "redOne", "redTwo", "redThree", "views"].map((n) => (
        <ToolButton key={n} name={n} />
      ))}
      <HSep />
      {["view0", "view1", "view2", "view3"].map((n) => (
        <ToolButton key={n} name={n} />
      ))}
    </HGroup>
  </div>
);

/* ---------- vertical tool columns ---------- */

// "-" draws a separator, a trailing "*" marks a fly-out
const VGroup = ({ items, className }) => (
  <div
    className={clsx(
      "flex flex-col items-center border border-t-white border-l-white border-r-[#808080] border-b-[#808080] pb-1.5",
      className
    )}
  >
    <div className="h-2.5 w-5 shrink-0 pt-0.5">
      <Ridge />
      <Ridge />
    </div>
    {items.map((item, i) =>
      item === "-" ? (
        <span key={i} className="my-0.5 h-0.5 w-5 shrink-0 border-t border-t-[#808080] bg-white" />
      ) : (
        <ToolButton key={i} name={item.replace("*", "")} fly={item.endsWith("*")} />
      )
    )}
  </div>
);

const LEFT_TOOLS = [
  ["partGrey", "assemblyGrey", "clapper", "drawing"],
  [
    "part*", "axes*", "axesCyan*", "profile*", "mirrorPart*", "extrude*", "hole*", "planeRed*", "dimension*",
    "editPart*", "bolt*", "face*", "window*",
  ],
  ["screw*", "holeRed*", "shaft*", "insert*", "calc*", "fem*"],
];

const DIM_TOOLS = [
  "dimension", "paramDim", "ordinate", "-", "pencil", "editDim", "moveDim", "alignDim*", "-",
  "leader*", "textA*", "leaderA*", "-", "brushDim", "-", "books*",
];

const EDIT_TOOLS = [
  "erase", "copy", "mirror", "offset", "array", "move", "rotate", "scale", "stretch", "trim", "extend",
  "breakPt", "breakGap", "chamfer", "fillet", "explode",
];

const SNAP_TOOLS = [
  "track", "from", "dotX*", "-", "filter", "zFilter", "-", "endpoint", "midpoint", "intersect", "apparent",
  "-", "insertion", "apex", "between", "corner", "-", "center", "quadrant", "perpendicular", "tangent",
];

/* ---------- browser tree ---------- */

// line: how much of the vertical guide is drawn beside the node
const TREE = [
  { depth: 0, box: "-", icon: "assembly", text: "BEISPIEL - PROJEKTION 3D AUF SKIZZE ASSOZIATIV" },
  { depth: 1, line: "full", icon: "sheet", text: "PROJEKTION 3D AUF SKIZZE ASSIOZIATIV" },
  { depth: 1, line: "full", box: "-", icon: "part", text: "ROHR 33,7X_1", selected: true },
  { depth: 2, line: "full", rail: true, icon: "plane", text: "ArbeitsEbene1" },
  { depth: 2, line: "full", rail: true, icon: "plane", text: "ArbeitsEbene2" },
  { depth: 2, line: "full", rail: true, icon: "plane", text: "ArbeitsEbene3" },
  { depth: 2, line: "full", rail: true, icon: "point", text: "Arbeitspunkt1" },
  { depth: 2, line: "half", rail: true, box: "+", icon: "extrudeGrey", text: "ExtrusionBlind1" },
  { depth: 1, line: "half", box: "-", icon: "partGreen", text: "I-PROFIL - DIN1025-2 - S235JR - IPB 300_1" },
  { depth: 2, line: "full", box: "+", icon: "extrude", text: "BaseExt" },
  { depth: 2, line: "full", icon: "round", text: "Abrunden1" },
  { depth: 2, line: "full", icon: "planeTwo", text: "ArbeitsEbene2" },
  { depth: 2, line: "half", box: "+", icon: "extrude", text: "ExtrusionMitteBeidseitig1" },
];

const ExpandBox = ({ sign }) => (
  <>
    <path d="M2.500 4.500h8v8h-8z" fill="#fff" stroke="#000" />
    <path d={sign === "+" ? "M4 8.500h5M6.500 6v5" : "M4 8.500h5"} stroke="#000" />
  </>
);

const TreeRow = ({ depth, line, rail, box, icon, text, selected }) => (
  <li className="flex h-[18px] items-center whitespace-nowrap">
    {Array.from({ length: depth }, (_, i) => (
      <svg key={i} viewBox="0 0 13 18" className="h-[18px] w-[13px] shrink-0" aria-hidden="true">
        {rail && i === 1 && <path d="M6.500 0v18" stroke="#808080" strokeDasharray="1 1" />}
      </svg>
    ))}
    <svg viewBox="0 0 19 18" className="h-[18px] w-[19px] shrink-0" fill="none" aria-hidden="true">
      {line && <path d={line === "full" ? "M6.500 0v18" : "M6.500 0v9"} stroke="#808080" strokeDasharray="1 1" />}
      <path d="M7 8.500h12" stroke="#808080" strokeDasharray="1 1" />
      {box && <ExpandBox sign={box} />}
    </svg>
    <Icon name={icon} />
    <span className={clsx("h-4 leading-4", selected && "bg-[#0a246a] text-white")}>{text}</span>
  </li>
);

const Browser = () => (
  <section className="flex h-[397px] shrink-0 flex-col pt-1">
    <PanelGrip className="ml-1 mr-1 gap-1" />
    <div className="mt-[7px] flex items-end pl-2">
      <button type="button" className="h-5 rounded-t-sm border border-b-0 border-white border-r-[#404040] px-1.5">Modell</button>
      <button type="button" className="h-[18px] rounded-t-sm border border-b-0 border-white border-r-[#404040] px-1">Szene</button>
      <button type="button" className="h-[18px] rounded-t-sm border border-b-0 border-white border-r-[#404040] px-1">Zeichnung</button>
    </div>
    <div className="mx-2 h-[309px] border border-t-white border-l-white border-r-[#404040] border-b-[#404040] py-0.5 px-[3px] shadow-[inset_-1px_-1px_#808080]">
      <ul className="h-full border border-black bg-white pl-[7px]">
        {TREE.map((row, i) => (
          <TreeRow key={i} {...row} />
        ))}
      </ul>
    </div>
    <div className="mx-auto mt-3 flex h-6 items-center bg-[#c0c0c0]">
      {["part", "assembly", "window", "page", "face", "bolt", "flash"].map((n) => (
        <button key={n} type="button" aria-label={n} className="flex w-6 justify-center">
          <Icon name={n} className={n === "face" ? "size-6" : n === "window" ? "size-5" : "size-4"} />
        </button>
      ))}
    </div>
  </section>
);

const Recovery = () => (
  <section className="flex grow flex-col border-t-2 border-black bg-[#edecea] px-2 pb-3">
    <PanelGrip className="-ml-0.5 -mr-0.5 mt-1 gap-1" />
    <div className="mt-0.5 flex h-[30px] gap-2">
      <span className="mt-0.5 flex size-[15px] shrink-0 items-center justify-center rounded-sm border-2 border-[#a9cbe8] bg-white font-['Liberation_Serif',serif] font-bold text-[#666]">
        i
      </span>
      <a href="#wiederherstellung" className="w-[240px] leading-[13px] text-[#3a0ca3] underline">
        Informationen über die Wiederherstellung von Zeichnungen
      </a>
    </div>
    <SectionHeader className="h-[18px] pl-[9px]">Sicherungsdateien</SectionHeader>
    <div className="h-[120px] border border-t-0 border-[#c6c2ba] bg-white pl-1.5">
      <div className="flex items-center text-[#333]">
        <span className="flex w-4 pl-px">
          <svg viewBox="2 4 9 9" className="size-[9px]" fill="none" aria-hidden="true">
            <ExpandBox sign="+" />
          </svg>
        </span>
        <Icon name="folder" />
        <span className="pl-1">IPB-Rahmen</span>
      </div>
    </div>
    <div className="flex h-3 flex-col items-center justify-center gap-0.5">
      <span className="border-x-4 border-b-4 border-x-transparent border-b-[#b8b4ac]" />
      <span className="border-x-4 border-t-4 border-x-transparent border-t-[#b8b4ac]" />
    </div>
    <SectionHeader className="h-[18px] pl-[9px]">Details</SectionHeader>
    <div className="mb-3 grow border border-t-0 border-[#c6c2ba] bg-[#eeeeee]" />
    <SectionHeader className="h-[18px] pl-[9px]">Voransicht</SectionHeader>
    <div className="h-[55px] border border-t-0 border-[#c6c2ba] bg-[#dddddd]" />
  </section>
);

/* ---------- drawing area ---------- */

// rear and front outlines of the I-beam
const BEAM_OUTLINES = [
  "M451 353L642 344V357L567 361Q550 363 549.500 378V524Q550 541 565 544L642 540V553L451 562V549L528 546Q542 540 542.500 528V380Q541 366 526 363L451 366Z",
  "M845 441L1036 432V445L960 449Q944 453 944.500 470V614Q946 629 960 631L1037 628V641L846 650V637L922 633Q937 628 937.500 614V470Q936 454 924 451L845 454Z",
];

const BEAM_EDGES = [
  "M451 353L845 441", "M451 366L845 454", "M642 344L1036 432", "M642 357L1036 445",
  "M567 361L960 449", "M529 363L924 451", "M537 366L932 454", "M555 366L950 455",
  "M542 379L937 467", "M549 380L944 468", "M551 371L946 459",
  "M451 549L846 637", "M451 562L846 650", "M642 540L1037 628", "M642 553L1037 641",
  "M528 546L922 633", "M565 544L960 631", "M542 525L937 613", "M549 526L944 614",
  "M539 540L934 628", "M556 540L951 628", "M551 534L946 622",
];

const Drawing = () => (
  <svg viewBox="382 66 731 769" preserveAspectRatio="xMinYMax meet" className="h-full w-full" fill="none" role="img" aria-label="Zeichnung">
    <g stroke="#54708f" shapeRendering="crispEdges">
      {BEAM_OUTLINES.map((d) => <path key={d} d={d} />)}
      {BEAM_EDGES.map((d) => <path key={d} d={d} />)}
    </g>
    <g stroke="#e619a0" shapeRendering="crispEdges">
      <path d="M677 488l191-9M677 490l191-9M677 499l187-8M677 501l195-9M677 510l191-9M677 512l191-9" />
      <ellipse cx="677" cy="500" rx="4.500" ry="11.500" strokeWidth="2" />
      <ellipse cx="868" cy="491" rx="4.500" ry="11.500" strokeWidth="2" />
      <path d="M863 492h9" />
    </g>
    <g stroke="#4d7086" shapeRendering="crispEdges">
      <ellipse cx="740" cy="497" rx="4" ry="11.500" />
      <ellipse cx="747.500" cy="497" rx="4" ry="11.500" />
      <path d="M735 496.500h17M743.500 486v23" />
    </g>
    <path d="M666 500.500h20M676.500 489v22" stroke="#b8ffff" />
    <g stroke="#fff" shapeRendering="crispEdges">
      <path d="M528.500 307v68M494 334l66 14M525.500 338.500h6v6h-6z" />
      <path d="M504.500 731v68M504 799l-79 4M504 799l24 5" />
      <path d="M504.500 712L498 731M504.500 712L511 731M504.500 712v19M504.500 712l-3 17M504.500 712l3 17" strokeWidth=".8" />
      <circle cx="532.500" cy="806" r="6.500" />
      <path d="M528 804l9 3M532.500 802v7" />
    </g>
    <g fill="#fff" fontFamily="Lato, sans-serif" fontWeight="300" fontSize="25" textAnchor="middle">
      <text x="506" y="700">Y</text>
      <text x="403" y="814">Z</text>
      <text x="560" y="821">X</text>
    </g>
  </svg>
);

const Viewport = () => (
  <main className="flex min-w-0 grow flex-col border-l-2 border-[#808080] pb-0.5">
    <div className="flex min-h-0 grow">
      <div className="min-w-0 grow bg-black">
        <Drawing />
      </div>
      <div className={clsx("flex w-4 shrink-0 flex-col", track)}>
        <ArrowButton dir="up" />
        <span className="grow-[287]" />
        <span className={clsx("h-4", raised)} />
        <span className="grow-[432]" />
        <ArrowButton dir="down" />
      </div>
    </div>
    <div className="flex h-4 shrink-0">
      {["first", "prev", "next", "last"].map((d) => (
        <ArrowButton key={d} dir={d} className="h-4 w-[18px]" />
      ))}
      <button type="button" className="ml-[3px] h-4 bg-black px-[7px] leading-4 text-white [clip-path:polygon(0_0,100%_0,calc(100%-5px)_100%,5px_100%)]">
        Modell
      </button>
      <button type="button" className="border-b border-black pl-1 leading-[15px]">Layout1</button>
      <svg viewBox="0 0 6 16" className="h-4 w-1.5" stroke="#000" aria-hidden="true">
        <path d="M5.500 0L0 16" />
      </svg>
      <div className="ml-auto flex w-[249px]">
        <span className={clsx("w-1", raised)} />
        <div className={clsx("flex grow", track)}>
          <ArrowButton dir="left" className="h-4 w-[18px]" />
          <span className="grow-[78]" />
          <span className={clsx("w-4", raised)} />
          <span className="grow-[117]" />
          <ArrowButton dir="right" />
        </div>
      </div>
      <span className="w-4" />
    </div>
  </main>
);

/* ---------- properties ---------- */

const PROPERTIES = [
  {
    title: "Allgemein",
    rows: [
      ["Farbe", "VonLayer", "swatch"], ["Layer", "0"], ["Linientyp", "VonLa...", "line"],
      ["Linienty...", "1"], ["Linienst...", "VonLa...", "line"], ["Objekt...", "0"],
    ],
  },
  {
    title: "Plotstil",
    locked: ["VonFarbe", "Modell", "Nicht verfügbar"],
    rows: [["Plotstil", "VonFarbe"], ["Plotstilt...", "Keine"], ["Plottab...", "Modell"], ["Plottab...", "Nicht verfügbar"]],
  },
  {
    title: "Ansicht",
    locked: ["701.41", "-65.23", "0", "1095", "2128.98"],
    rows: [["Mittelp...", "701.41"], ["Mittelp...", "-65.23"], ["Mittelp...", "0"], ["Höhe", "1095"], ["Breite", "2128.98"]],
  },
  {
    title: "Verschiedenes",
    locked: [""],
    rows: [["BKS-Sy...", "Ja"], ["BKS-Sy...", "Nein"], ["BKS je ...", "Nein"], ["BKS-Name", ""]],
  },
];

const Properties = () => (
  <aside className="flex w-[186px] shrink-0 flex-col border-l-2 border-black bg-[#edecea] pb-3 pl-[11px] pr-4">
    <PanelGrip className="-ml-1 -mr-2.5 mt-1.5 gap-1" />
    <div className="mt-1 flex items-start">
      <div className="mt-[5px] flex h-5 w-[85px] border border-[#404040] bg-white">
        <select aria-label="Auswahl" className="w-0 grow appearance-none bg-white outline-none">
          <option>Keine Auswahl</option>
        </select>
        <ArrowButton dir="down" className="h-[18px] w-4" />
      </div>
      <div className="ml-1.5 -mr-2 flex border border-[#c6c2ba]">
        <ToolButton name="quickSelect" className="size-6 border-r border-[#c6c2ba]" />
        <ToolButton name="pick" className="size-6 border-r border-[#c6c2ba]" />
        <ToolButton name="funnel" className="size-6" />
      </div>
    </div>
    <div className="mt-3 space-y-[7px]">
      {PROPERTIES.map(({ title, rows, locked = [] }) => (
        <div key={title}>
          <SectionHeader className="h-[17px] pl-1.5">{title}</SectionHeader>
          <table className="ml-4 w-[140px] table-fixed border-collapse">
            <tbody>
              {rows.map(([label, value, mark], i) => (
                <tr key={i} className="h-[17px]">
                  <th scope="row" className="w-[54px] whitespace-nowrap border border-[#c6c2ba] p-0 pl-px text-left font-normal leading-4">
                    {label}
                  </th>
                  <td
                    className={clsx(
                      "whitespace-nowrap border border-[#c6c2ba] p-0 pl-px leading-4",
                      !locked.includes(value) && "bg-white"
                    )}
                  >
                    <span className="flex items-center">
                      {mark === "swatch" && <span className="mr-1.5 ml-0.5 size-[9px] border border-black" />}
                      {mark === "line" && <span className="mr-1 ml-1 h-px w-8 bg-black" />}
                      {value}
                    </span>
                  </td>
                </tr>
              ))}
            </tbody>
          </table>
        </div>
      ))}
    </div>
    <div className="mt-auto h-8 border border-[#c6c2ba]" />
  </aside>
);

/* ---------- command line, status bar, taskbar ---------- */

const LOG = [
  "Regeneriert Modell.",
  "Befehl:",
  "Befehl: Entgegengesetzte Ecke angeben:",
  "Befehl: *Abbruch*",
  "Befehl:",
  "Befehl: *Abbruch*",
];

const CommandLine = () => (
  <section className="shrink-0 border-t-2 border-white">
    <div className="mt-[3px] border-t-2 border-black pt-[3px]">
      <div className="flex h-[110px] pr-2">
        <div className="my-1 mr-[3px] ml-1.5 flex w-[7px] gap-px">
          <span className="w-[3px] border border-t-white border-l-white border-r-[#808080] border-b-[#808080]" />
          <span className="w-[3px] border border-t-white border-l-white border-r-[#808080] border-b-[#808080]" />
        </div>
        <div className="flex min-w-0 grow flex-col border-t-2 border-l-2 border-black font-['Liberation_Mono',monospace] text-[13px] leading-[13px]">
          <div className="flex h-[91px] border-b border-[#808080] bg-white">
            <pre className="grow pl-px font-[inherit]">{LOG.join("\n")}</pre>
            <div className={clsx("flex w-4 flex-col", track)}>
              <ArrowButton dir="up" />
              <span className="grow" />
              <span className={clsx("h-4", raised)} />
              <ArrowButton dir="down" />
            </div>
          </div>
          <div className="flex h-[17px]">
            <label htmlFor="befehl" className="bg-white pl-px pt-0.5">Befehl:</label>
            <input id="befehl" className="min-w-0 grow bg-white pl-2 outline-none" />
            <div className={clsx("flex w-[62px]", track)}>
              <ArrowButton dir="left" />
              <span className={clsx("w-4", raised)} />
              <span className="grow" />
              <ArrowButton dir="right" />
            </div>
            <span className="w-4" />
          </div>
        </div>
      </div>
    </div>
  </section>
);

const STATUS_BUTTONS = [
  ["FANG", "w-8"], ["RASTER", "w-12"], ["ORTHO", "w-[43px]"], ["POLAR", "w-10"], ["OFANG", "w-[41px]"],
  ["OTRACK", "w-12"], ["DYN", "w-[26px]"], ["LST", "w-6"], ["MODELL", "w-[50px]"],
];

const StatusBar = () => (
  <footer className="flex h-[25px] shrink-0 items-center border-t border-[#808080] pl-1.5 pr-1 font-['Liberation_Sans',sans-serif] shadow-[inset_0_1px_#fff]">
    <span className="w-[302px] shrink-0 whitespace-nowrap">Ziel: BEISPIEL - PROJEKTION 3D AUF SKIZZE ASSOZIATIV</span>
    <output className="h-[18px] w-[238px] shrink-0 border border-t-[#808080] border-l-[#808080] border-r-white border-b-white px-px leading-4">
      -73.83, 22.57, 0.00
    </output>
    <div className="ml-1 flex gap-1">
      {STATUS_BUTTONS.map(([label, width]) => (
        <button
          key={label}
          type="button"
          className={clsx(
            "flex h-[18px] items-center justify-center border leading-4",
            width,
            label === "MODELL"
              ? "border-t-black border-l-black border-r-white border-b-white"
              : "border-t-white border-l-white border-r-[#808080] border-b-[#808080]"
          )}
        >
          {label}
        </button>
      ))}
    </div>
    <div className="ml-auto flex h-[18px] w-16 items-center justify-around border border-t-[#808080] border-l-[#808080] border-r-white border-b-white">
      <Icon name="dish" />
      <Icon name="plug" />
      <Icon name="padlock" />
    </div>
    <span className="ml-1.5 border-x-4 border-t-4 border-x-transparent border-t-black" />
  </footer>
);

const Taskbar = () => (
  <nav className="flex h-[52px] shrink-0 border-t border-white pt-0.5">
    <button type="button" className={clsx("ml-0.5 flex h-[22px] w-[52px] items-center gap-px pl-px font-bold", raised)}>
      <Icon name="flag" />
      Start
    </button>
    <div className="ml-1.5 grid h-[44px] w-[115px] grid-cols-5 content-start gap-y-1.5 pt-1">
      {["mail", "clock", "green", "transfer", "music", "redC", "search", "fox"].map((n) => (
        <button key={n} type="button" aria-label={n}>
          <Icon name={n} />
        </button>
      ))}
    </div>
    <span className="ml-[15px] mt-[15px]">Programme</span>
    <span className="ml-[11px] mt-px text-[14px] font-bold leading-3">»</span>
    <button
      type="button"
      className={clsx(
        "ml-1 flex h-[22px] w-[160px] items-center gap-1 border border-t-[#404040] border-l-[#404040] border-r-white border-b-white pl-[3px] font-bold whitespace-nowrap",
        track
      )}
    >
      <Icon name="app" />
      Mechanical Desktop -...
    </button>
    <span className="ml-auto mt-2 h-8 w-0.5 border-l border-l-[#808080] bg-white" />
    <div className="mr-1 ml-[5px] flex h-[46px] w-[196px] items-center border border-t-[#808080] border-l-[#808080] border-r-white border-b-white pl-0.5">
      <div className="grid w-[126px] grid-cols-7 gap-y-0.5">
        {[
          "pause", "server", "netOff", "netOff2", "speaker", "usb", "kasper",
          "checker", "zeroTwo", "omega", "crossPattern", "greyScreen", "quick", "redFlash",
        ].map((n) => (
          <Icon key={n} name={n} />
        ))}
      </div>
      <div className="grow text-center leading-[19px]">
        <div>20:55</div>
        <div>Sonntag</div>
      </div>
    </div>
  </nav>
);

export default function App() {
  return (
    <div className="flex min-h-screen flex-col bg-[#d4d0c8] font-['DejaVu_Sans_Condensed','DejaVu_Sans',sans-serif] text-[11px] leading-4 text-black">
      <header className="shrink-0">
        <div className="flex h-[18px] items-center bg-linear-to-r from-[#0a246a] to-[#a6caf0] pl-0.5 font-bold text-white">
          <Icon name="app" />
          <h1 className="pl-px whitespace-nowrap">
            {"Mechanical Desktop - [C:\\Dokumente und Einstellungen\\Matthias\\Desktop\\aktuell Project\\Beispiel - Projektion 3D auf Skizze assoziativ.dwg]"}
          </h1>
          <CaptionSet />
        </div>
        <div className="flex h-5 items-center pl-1">
          <Icon name="assembly" />
          {MENU.map((item) => (
            <button key={item} type="button" className="px-[5px]">{item}</button>
          ))}
          <CaptionSet />
        </div>
        <Toolbars />
      </header>

      <div className="flex grow">
        <div className="flex w-[348px] shrink-0 flex-col border-r-2 border-white">
          <Browser />
          <Recovery />
        </div>
        <div className="w-1.5 shrink-0 border-r-2 border-black" />
        <div className="w-[26px] shrink-0">
          <VGroup items={LEFT_TOOLS[0]} />
          <VGroup items={LEFT_TOOLS[1]} />
          <VGroup items={LEFT_TOOLS[2]} className="mt-[22px]" />
        </div>
        <Viewport />
        <div className="flex w-[85px] shrink-0 items-start border-l border-white">
          <VGroup items={DIM_TOOLS} className="w-[26px]" />
          <div className="w-[26px]">
            <VGroup items={EDIT_TOOLS} />
            <VGroup items={SNAP_TOOLS} />
          </div>
          <VGroup items={["red0", "red1", "red2", "red3", "red4"]} className="w-[26px]" />
        </div>
        <Properties />
      </div>

      <CommandLine />
      <StatusBar />
      <Taskbar />
    </div>
  );
}
